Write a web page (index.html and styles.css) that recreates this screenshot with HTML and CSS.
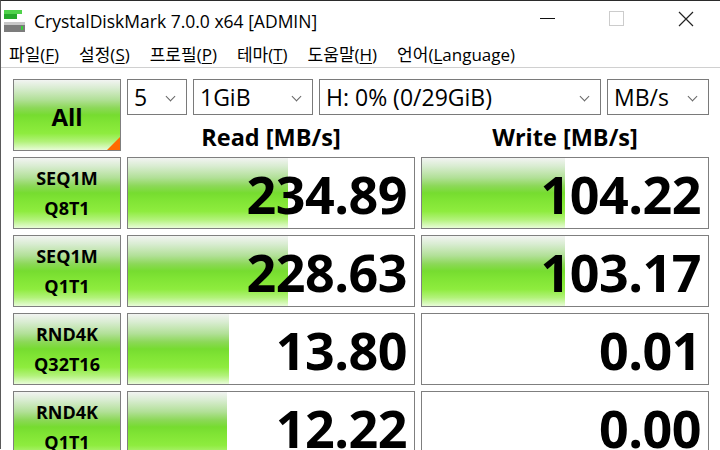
FILE: index.html
```html
<!DOCTYPE html>
<html>
<head>
  <title>CrystalDiskMark 7.0.0 x64 [ADMIN]</title>
  <link rel="stylesheet" href="styles.css">
</head>
<body>
  <div class="window">
    <div class="titlebar">
      <svg class="app-icon" width="22" height="24" viewBox="0 0 22 24">
        <rect x="0" y="1" width="18" height="4" fill="#4fd24a"/>
        <rect x="0" y="5" width="13" height="5" fill="#26a82a"/>
        <rect x="0" y="13" width="21" height="3" fill="#c8c8c8"/>
        <rect x="0" y="16" width="21" height="7" fill="#7c7c7c"/>
        <rect x="17" y="17" width="2" height="4" fill="#39d03a"/>
      </svg>
      <span class="title">CrystalDiskMark 7.0.0 x64 [ADMIN]</span>
      <div class="win-buttons">
        <span class="win-btn"><span class="min-line"></span></span>
        <span class="win-btn"><span class="max-box"></span></span>
        <span class="win-btn">
          <svg width="16" height="16" viewBox="0 0 16 16">
            <path d="M1 1 L15 15 M15 1 L1 15" stroke="#222" stroke-width="1.2" fill="none"/>
          </svg>
        </span>
      </div>
    </div>

    <div class="menubar">
      <span class="menu-item">파일(<u>F</u>)</span>
      <span class="menu-item">설정(<u>S</u>)</span>
      <span class="menu-item">프로필(<u>P</u>)</span>
      <span class="menu-item">테마(<u>T</u>)</span>
      <span class="menu-item">도움말(<u>H</u>)</span>
      <span class="menu-item">언어(<u>L</u>anguage)</span>
    </div>

    <div class="main">
      <div class="grid">
        <div class="all-btn green">All</div>

        <div class="top-area">
          <div class="controls">
            <div class="select w-count">5<span class="chev"></span></div>
            <div class="select w-size">1GiB<span class="chev"></span></div>
            <div class="select w-drive">H: 0% (0/29GiB)<span class="chev"></span></div>
            <div class="select w-unit">MB/s<span class="chev"></span></div>
          </div>
          <div class="headers">
            <div class="col-head">Read [MB/s]</div>
            <div class="col-head">Write [MB/s]</div>
          </div>
        </div>

        <div class="label green">SEQ1M<br>Q8T1</div>
        <div class="meter"><div class="bar" style="width: 56%"></div><span class="value">234.89</span></div>
        <div class="meter"><div class="bar" style="width: 50%"></div><span class="value">104.22</span></div>

        <div class="label green">SEQ1M<br>Q1T1</div>
        <div class="meter"><div class="bar" style="width: 56%"></div><span class="value">228.63</span></div>
        <div class="meter"><div class="bar" style="width: 50%"></div><span class="value">103.17</span></div>

        <div class="label green">RND4K<br>Q32T16</div>
        <div class="meter"><div class="bar" style="width: 35.3%"></div><span class="value">13.80</span></div>
        <div class="meter"><div class="bar" style="width: 0%"></div><span class="value">0.01</span></div>

        <div class="label green">RND4K<br>Q1T1</div>
        <div class="meter"><div class="bar" style="width: 34.6%"></div><span class="value">12.22</span></div>
        <div class="meter"><div class="bar" style="width: 0%"></div><span class="value">0.00</span></div>
      </div>
    </div>
  </div>
</body>
</html>
```

FILE: styles.css
```css
body {
  margin: 0;
  width: 720px;
  height: 450px;
  overflow: hidden;
  background-color: #fff;
  font-family: "Open Sans", "Noto Sans CJK KR", sans-serif;
  color: #000;
}
.window {
  height: 449px;
  border-top: 1px solid #2b2b2b;
  border-left: 1px solid #5a5a5a;
  box-sizing: border-box;
}
.titlebar {
  display: flex;
  align-items: center;
  height: 39px;
}
.app-icon {
  margin-left: 3px;
  margin-right: 8px;
}
.title {
  font-size: 17.5px;
  color: #000;
}
.win-buttons {
  display: flex;
  margin-left: auto;
  height: 100%;
}
.win-btn {
  width: 69px;
  display: flex;
  align-items: center;
  justify-content: center;
  padding-bottom: 4px;
}
.min-line {
  width: 15px;
  height: 1px;
  background-color: #111;
}
.max-box {
  width: 13px;
  height: 13px;
  border: 1px solid #ccc;
}
.menubar {
  display: flex;
  height: 27px;
  align-items: center;
  padding-left: 0;
  border-bottom: 1px solid #d0d0d0;
  font-size: 17px;
}
.menu-item {
  padding: 0 10px;
}
.menu-item:first-child {
  padding-left: 8px;
}
.menu-item u {
  text-decoration-thickness: 1px;
  text-underline-offset: 2px;
}
.main {
  padding: 11px 0 0 12px;
}
.grid {
  display: grid;
  grid-template-columns: 108px 288px 288px;
  grid-auto-rows: 72px;
  gap: 6px;
}
.green {
  background: linear-gradient(to bottom,
    #f2f4f2 0%,
    #d8ecd0 12%,
    #b2e098 28%,
    #8cd858 40%,
    #76dc30 50%,
    #80e434 60%,
    #8eec3e 76%,
    #b2f27a 88%,
    #e8fcd8 100%);
}
.all-btn {
  border: 1px solid #7f7f7f;
  box-sizing: border-box;
  display: flex;
  align-items: center;
  justify-content: center;
  font-size: 24px;
  font-weight: bold;
  position: relative;
  padding-top: 2px;
}
.all-btn::after {
  content: "";
  position: absolute;
  right: 0;
  bottom: 0;
  border-style: solid;
  border-width: 0 0 13px 13px;
  border-color: transparent transparent #ff6a00 transparent;
}
.top-area {
  grid-column: 2 / 4;
  display: flex;
  flex-direction: column;
}
.controls {
  display: flex;
  gap: 6px;
  height: 36px;
}
.select {
  border: 1px solid #7a7a7a;
  box-sizing: border-box;
  height: 36px;
  display: flex;
  align-items: center;
  padding-left: 6px;
  font-size: 23px;
  position: relative;
  padding-bottom: 1px;
}
.w-count { width: 60px; }
.w-size { width: 120px; }
.w-drive { width: 282px; }
.w-unit { width: 102px; }
.chev {
  position: absolute;
  right: 12px;
  top: 13px;
  width: 6px;
  height: 6px;
  border-right: 1px solid #666;
  border-bottom: 1px solid #666;
  transform: rotate(45deg);
}
.headers {
  display: grid;
  grid-template-columns: 288px 288px;
  gap: 6px;
  padding-top: 8px;
}
.col-head {
  text-align: center;
  font-size: 23.5px;
  font-weight: bold;
  line-height: 28px;
}
.label {
  border: 1px solid #7f7f7f;
  box-sizing: border-box;
  display: flex;
  align-items: center;
  justify-content: center;
  text-align: center;
  font-size: 18px;
  font-weight: bold;
  line-height: 30px;
}
.meter {
  border: 1px solid #7f7f7f;
  box-sizing: border-box;
  position: relative;
  display: flex;
  align-items: center;
  justify-content: flex-end;
  padding-right: 7px;
  background-color: #fff;
}
.meter .bar {
  position: absolute;
  left: 0;
  top: 0;
  bottom: 0;
  background: linear-gradient(to bottom,
    #f2f4f2 0%,
    #d8ecd0 12%,
    #b2e098 28%,
    #8cd858 40%,
    #76dc30 50%,
    #80e434 60%,
    #8eec3e 76%,
    #b2f27a 88%,
    #e8fcd8 100%);
}
.value {
  position: relative;
  font-size: 52px;
  font-weight: bold;
  line-height: 70px;
  padding-top: 2px;
  letter-spacing: -0.5px;
}
```
